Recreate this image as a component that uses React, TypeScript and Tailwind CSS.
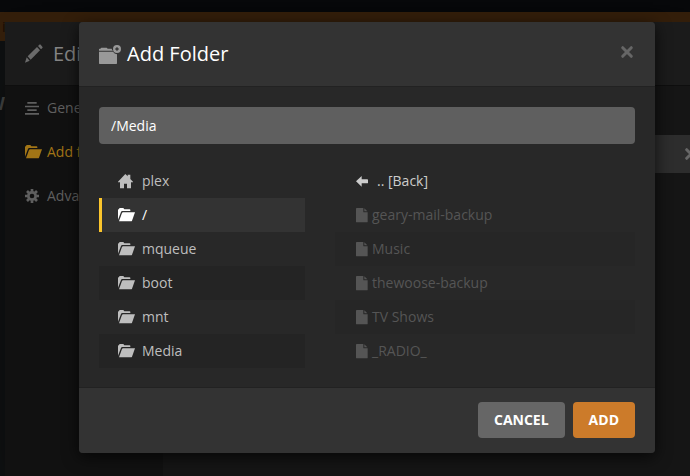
import { useState } from "react";
import type { ReactNode } from "react";
import clsx from "clsx";

// Navigation Data
const navItems = [
  { id: "general", label: "General", icon: <LinesIcon /> },
  { id: "folders", label: "Add folders", icon: <FolderOpenIcon /> },
  { id: "advanced", label: "Advanced", icon: <CogIcon /> },
];

// Folder Data
const roots = [
  { name: "plex", icon: <HomeIcon /> },
  { name: "/", icon: <FolderOpenIcon /> },
  { name: "mqueue", icon: <FolderOpenIcon /> },
  { name: "boot", icon: <FolderOpenIcon /> },
  { name: "mnt", icon: <FolderOpenIcon /> },
  { name: "Media", icon: <FolderOpenIcon /> },
];

const entries = ["geary-mail-backup", "Music", "thewoose-backup", "TV Shows", "_RADIO_"];

export default function App() {
  return (
    <div className="relative h-screen overflow-hidden bg-[#0e1011] font-['Open_Sans',sans-serif] text-sm">
      <PageBackdrop />
      <EditLibraryPanel />
      <AddFolderModal />
    </div>
  );
}

function PageBackdrop() {
  return (
    <div>
      <div className="h-3 bg-[#07080a]" />
      <div className="flex h-[29px] items-center bg-[#341f0b] pl-0.5 text-[#150c04]">i</div>
      <div className="flex w-[5px] justify-end overflow-hidden pt-12 text-lg font-bold text-[#3c3e3e]">
        W
      </div>
    </div>
  );
}

function EditLibraryPanel() {
  return (
    <section className="absolute top-[22px] right-0 bottom-0 left-[5px] flex flex-col bg-[#151515] shadow-2xl">
      <header className="flex h-16 shrink-0 items-center gap-2.5 border-b border-[#0e0e0e] bg-[#1b1b1b] pl-5 text-[#6b6b6b]">
        <PencilIcon />
        <h2 className="text-xl text-[#858585]">Edit</h2>
      </header>
      <div className="flex flex-1">
        <nav className="w-[158px] bg-[#111111]">
          {navItems.map((item) => (
            <a
              key={item.id}
              href={`#${item.id}`}
              className={clsx(
                "flex h-11 items-center gap-1.5 pl-5",
                item.id === "folders" ? "text-[#a27516]" : "text-[#5f5f5f]"
              )}
            >
              <span className="w-4">{item.icon}</span>
              {item.label}
            </a>
          ))}
        </nav>
        <div className="flex-1 pt-[49px] pl-5">
          <div className="flex h-[38px] items-center justify-end bg-[#2d2d2d] text-[#666666]">
            <button aria-label="Remove folder" className="-mr-2">
              <CloseIcon />
            </button>
          </div>
        </div>
      </div>
    </section>
  );
}

function AddFolderModal() {
  const [path, setPath] = useState("/Media");
  const [selected, setSelected] = useState("/");

  return (
    <div className="absolute inset-0 pt-[22px] pr-[35px] pl-[79px]">
      <div
        role="dialog"
        aria-labelledby="modal-title"
        className="overflow-hidden rounded bg-[#282828] shadow-[0_4px_16px_rgba(0,0,0,0.7)]"
      >
        {/* Header */}
        <header className="flex h-16 items-center bg-[#333333] px-5">
          <span className="w-7 text-[#999999]">
            <FolderPlusIcon />
          </span>
          <h1 id="modal-title" className="flex-1 text-xl text-white">
            Add Folder
          </h1>
          <button aria-label="Close" className="pr-px pb-1 text-[#666666]">
            <CloseIcon />
          </button>
        </header>

        {/* Body */}
        <div className="border-t border-[#222222] px-5 pt-5 pb-[19px]">
          <input
            type="text"
            aria-label="Folder path"
            value={path}
            onChange={(e) => setPath(e.target.value)}
            className="h-[37px] w-full rounded bg-[#5f5f5f] px-3 text-white outline-none"
          />
          <div className="mt-5 flex gap-[30px]">
            <ul className="w-[206px] shrink-0">
              {roots.map((root) => (
                <li key={root.name} className="even:bg-[#242424]">
                  <button
                    onClick={() => setSelected(root.name)}
                    className={clsx(
                      "flex h-[34px] w-full items-center border-l-3 pl-4",
                      selected === root.name
                        ? "border-[#fbc52c] bg-[#333333] text-white"
                        : "border-transparent text-[#bebebe]"
                    )}
                  >
                    <span className="w-6">{root.icon}</span>
                    {root.name}
                  </button>
                </li>
              ))}
            </ul>
            <ul className="flex-1">
              <li>
                <button className="flex h-[34px] w-full items-center pl-[21px] text-[#cccccc]">
                  <span className="w-[21px]">
                    <ArrowLeftIcon />
                  </span>
                  .. [Back]
                </button>
              </li>
              {entries.map((name) => (
                <Entry key={name}>{name}</Entry>
              ))}
            </ul>
          </div>
        </div>

        {/* Footer */}
        <footer className="flex justify-end gap-2 border-t border-[#222222] bg-[#333333] px-5 pt-3.5 pb-[15px] font-bold text-white">
          <button className="h-9 rounded-sm bg-[#666666] px-4">CANCEL</button>
          <button className="h-9 rounded-sm bg-[#cc7b2a] px-4">ADD</button>
        </footer>
      </div>
    </div>
  );
}

function Entry({ children }: { children: ReactNode }) {
  return (
    <li className="flex h-[34px] items-center pl-[21px] text-[#555555] odd:bg-[#262626]">
      <span className="w-4">
        <FileIcon />
      </span>
      {children}
    </li>
  );
}

// Icon Components
function FolderOpenIcon() {
  return (
    <svg width="17" height="14" viewBox="0 0 51 42" fill="currentColor" className="shrink-0 max-w-none">
      <path d="M0 35V6Q0 4 2 4L3 2Q4 0 6 0H15Q17 0 18 2L19 4H35Q37 4 37 6V9H13Q10 9 9 12Z" />
      <path d="M15 13H51L42 38Q41 40 39 40H3L12 15Q13 13 15 13Z" />
    </svg>
  );
}

function FolderPlusIcon() {
  return (
    <svg width="22" height="19" viewBox="0 0 66 57" fill="currentColor">
      <path d="M0 17V13Q0 11 2 11H4L7 8H23L26 11H38Q39 15 42 17Z" />
      <path d="M0 20H42Q46 27 54 28V55Q54 57 52 57H2Q0 57 0 55Z" />
      <path
        fillRule="evenodd"
        d="M54 0A12 12 0 1 1 54 24A12 12 0 1 1 54 0ZM52 7V10H49V14H52V17H56V14H59V10H56V7Z"
      />
    </svg>
  );
}

function HomeIcon() {
  return (
    <svg width="15" height="15" viewBox="0 0 45 45" fill="currentColor">
      <path d="M22 0L29 7V2H37V15L45 23V25H39V43H27V29H18V43H6V25H0V23Z" />
    </svg>
  );
}

function FileIcon() {
  return (
    <svg width="12" height="15" viewBox="0 0 36 45" fill="currentColor">
      <path d="M2 0H22V11Q22 13 24 13H35V41Q35 43 33 43H2Q0 43 0 41V2Q0 0 2 0Z" />
      <path d="M25 1L34 10H25Z" />
    </svg>
  );
}

function ArrowLeftIcon() {
  return (
    <svg width="12" height="11" viewBox="0 0 36 33" fill="currentColor">
      <path d="M0 16L17 0V10H34Q36 10 36 12V20Q36 22 34 22H17V32Z" />
    </svg>
  );
}

function CloseIcon() {
  return (
    <svg width="14" height="14" viewBox="0 0 14 14" stroke="currentColor" strokeWidth="3">
      <path strokeLinecap="round" d="M2.7 2.7L11.3 11.3M11.3 2.7L2.7 11.3" />
    </svg>
  );
}

function PencilIcon() {
  return (
    <svg width="18" height="19" viewBox="0 0 54 57" fill="currentColor">
      <path d="M39 6L43 2Q45 0 47 2L52 8Q54 10 52 12L48 16Z" />
      <path d="M36 9L45 19L17 47L8 37Z" />
      <path d="M5 40L14 50L0 56Z" />
    </svg>
  );
}

function LinesIcon() {
  return (
    <svg width="14" height="13" viewBox="0 0 42 39" fill="currentColor">
      <path d="M7 0H35V5H7ZM0 11H42V16H0ZM7 22H35V27H7ZM0 33H42V38H0Z" />
    </svg>
  );
}

function CogIcon() {
  return (
    <svg width="14" height="14" viewBox="0 0 42 42" fill="none" stroke="currentColor">
      <circle cx="21" cy="21" r="11" strokeWidth="8" />
      <path
        strokeWidth="8"
        d="M21 0V8M21 34V42M0 21H8M34 21H42M6 6L12 12M30 30L36 36M6 36L12 30M30 12L36 6"
      />
    </svg>
  );
}
